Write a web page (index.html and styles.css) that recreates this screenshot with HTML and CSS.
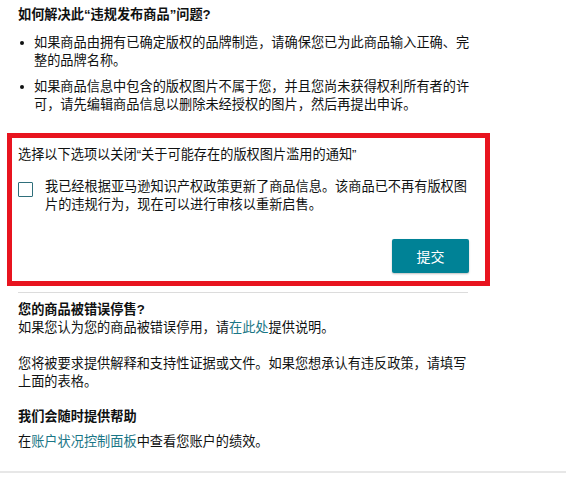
FILE: index.html
```html
<!DOCTYPE html>
<html lang="zh-CN">
<head>
	<meta charset="UTF-8">
	<title>违规发布商品</title>
	<link rel="stylesheet" href="styles.css">
</head>
<body>
	<div class="page">
		<div class="help">
			<h3 class="title">如何解决此“违规发布商品”问题?</h3>
			<ul class="tips">
				<li>如果商品由拥有已确定版权的品牌制造，请确保您已为此商品输入正确、完整的品牌名称。</li>
				<li>如果商品信息中包含的版权图片不属于您，并且您尚未获得权利所有者的许可，请先编辑商品信息以删除未经授权的图片，然后再提出申诉。</li>
			</ul>
		</div>

		<div class="appeal">
			<p class="appeal-label">选择以下选项以关闭“关于可能存在的版权图片滥用的通知”</p>
			<label class="check-row">
				<span class="box"></span>
				<span class="check-text">我已经根据亚马逊知识产权政策更新了商品信息。该商品已不再有版权图片的违规行为，现在可以进行审核以重新启售。</span>
			</label>
			<div class="actions">
				<button class="btn">提交</button>
			</div>
		</div>

		<div class="more">
			<h3 class="sub">您的商品被错误停售?</h3>
			<p>如果您认为您的商品被错误停用，请<a href="#">在此处</a>提供说明。</p>
			<p class="gap">您将被要求提供解释和支持性证据或文件。如果您想承认有违反政策，请填写上面的表格。</p>
			<h3 class="sub sub-2">我们会随时提供帮助</h3>
			<p class="last">在<a href="#">账户状况控制面板</a>中查看您账户的绩效。</p>
		</div>
	</div>
</body>
</html>
```

FILE: styles.css
```css
*{
	margin: 0;
	padding: 0;
	box-sizing: border-box;
}
body{
	font-family: "Liberation Sans", "Noto Sans CJK SC", sans-serif;
	font-size: 13.2px;
	line-height: 18px;
	color: #0f1111;
	background: #fff;
}
.page{
	width: 566px;
	padding-top: 6px;
	border-bottom: 2px solid #e7e7e7;
}
.help{
	padding: 0 90px 0 18px;
}
.title{
	font-size: 13.2px;
	font-weight: 700;
}
.tips{
	list-style: none;
	margin-top: 10px;
}
.tips li{
	position: relative;
	padding-left: 16px;
	margin-bottom: 8px;
}
.tips li::before{
	content: "";
	position: absolute;
	left: 2px;
	top: 7px;
	width: 4px;
	height: 4px;
	border-radius: 50%;
	background: #0f1111;
}
.appeal{
	width: 483px;
	margin: 19px 0 0 7px;
	border: 5px solid #e8141f;
	padding: 8px 16px 8px 6px;
}
.check-row{
	display: flex;
	gap: 12px;
	margin-top: 14px;
}
.box{
	flex: none;
	width: 15px;
	height: 15px;
	margin-top: 4px;
	border: 1px solid #2f6f7b;
	border-radius: 1px;
	background: #fff;
}
.check-text{
	flex: none;
	width: 428px;
}
.actions{
	display: flex;
	justify-content: flex-end;
	margin-top: 25px;
}
.btn{
	width: 77px;
	height: 34px;
	border: none;
	border-radius: 2px;
	background: #008296;
	color: #fff;
	font-family: inherit;
	font-size: 14px;
	box-shadow: 0 1px 2px rgba(0, 0, 0, 0.25);
	cursor: pointer;
}
.more{
	margin: 6px 98px 0 18px;
	border-top: 1px solid #dcdcdc;
	padding: 8px 0 20px;
}
.more p{
	width: 454px;
}
.sub{
	font-size: 13.2px;
	font-weight: 700;
}
.sub-2{
	margin-top: 17px;
	margin-bottom: 7px;
}
.gap{
	margin-top: 18px;
}
a{
	color: #1a7686;
	text-decoration: none;
}
```
